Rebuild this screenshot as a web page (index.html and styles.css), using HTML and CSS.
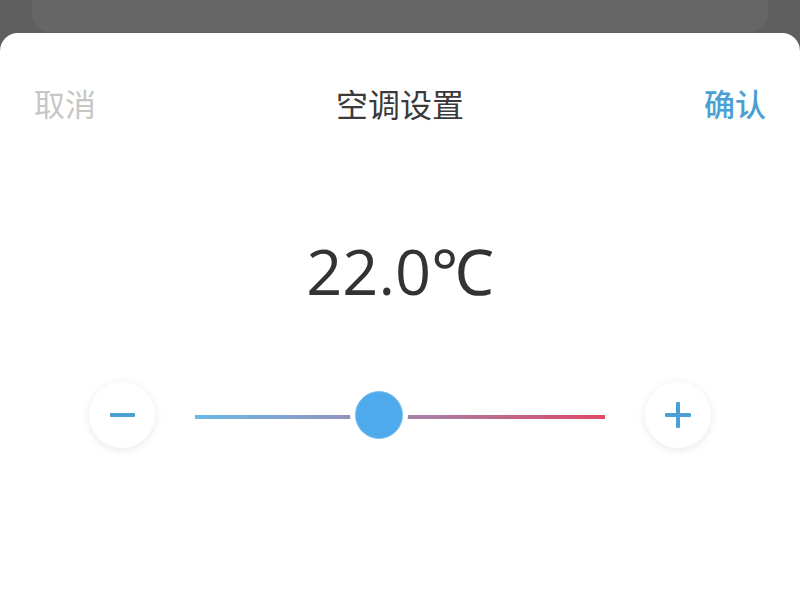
FILE: index.html
```html
<!DOCTYPE html>
<html lang="zh">
<head>
<meta charset="utf-8">
<link rel="stylesheet" href="styles.css">
</head>
<body>
<div class="backdrop"><div class="back-card"></div></div>
<div class="sheet">
  <div class="header">
    <span class="cancel">取消</span>
    <span class="title">空调设置</span>
    <span class="confirm">确认</span>
  </div>
  <div class="temp">22.0℃</div>
  <div class="controls">
    <div class="btn"><span class="minus"></span></div>
    <div class="track">
      <div class="thumb" style="left:184px"></div>
    </div>
    <div class="btn"><span class="plus"></span></div>
  </div>
</div>
</body>
</html>
```
FILE: styles.css
```css
html, body {
  margin: 0;
  padding: 0;
  width: 800px;
  height: 600px;
  overflow: hidden;
  background: #5f5f5f;
  font-family: "Noto Sans CJK SC", "Noto Sans", sans-serif;
}
.backdrop {
  height: 33px;
  padding: 0 32px;
}
.back-card {
  height: 32px;
  background: #666666;
  border-radius: 0 0 18px 18px;
}
.sheet {
  background: #ffffff;
  border-radius: 18px 18px 0 0;
  height: 567px;
  display: flex;
  flex-direction: column;
}
.header {
  display: flex;
  justify-content: space-between;
  align-items: center;
  padding: 50px 34px 0 34px;
  height: 40px;
  font-size: 31px;
  line-height: 40px;
}
.cancel { color: #c6c6c6; }
.title { color: #3a3a3a; font-size: 32px; }
.confirm { color: #4a9fd3; font-weight: 500; }
.temp {
  margin-top: 108px;
  height: 80px;
  line-height: 80px;
  text-align: center;
  font-family: "Open Sans", "Noto Sans", "Noto Sans CJK SC", sans-serif;
  font-size: 63px;
  color: #333333;
}
.controls {
  margin-top: 71px;
  display: flex;
  justify-content: center;
  align-items: center;
  gap: 40px;
}
.btn {
  width: 66px;
  height: 66px;
  border-radius: 50%;
  background: #ffffff;
  box-shadow: 0 2px 10px rgba(0, 0, 0, 0.09);
  display: flex;
  align-items: center;
  justify-content: center;
  position: relative;
}
.minus {
  width: 25px;
  height: 4px;
  background: #4a9fd4;
  border-radius: 1px;
}
.plus {
  width: 26px;
  height: 26px;
  position: relative;
}
.plus::before, .plus::after {
  content: "";
  position: absolute;
  background: #4a9fd4;
  border-radius: 1px;
}
.plus::before { left: 0; top: 11px; width: 26px; height: 4px; }
.plus::after { left: 11px; top: 0; width: 4px; height: 26px; }
.track {
  width: 410px;
  height: 4px;
  margin-top: 4px;
  background: linear-gradient(to right, #68b9e6, #9b8bb4 45%, #dd4a66);
  position: relative;
}
.thumb {
  position: absolute;
  top: -24px;
  margin-left: -24px;
  width: 46px;
  height: 46px;
  border-radius: 50%;
  background: #4eaaec;
  border: 1px solid #7cc0f0;
  box-shadow: 0 0 0 5px #ffffff;
}
```
